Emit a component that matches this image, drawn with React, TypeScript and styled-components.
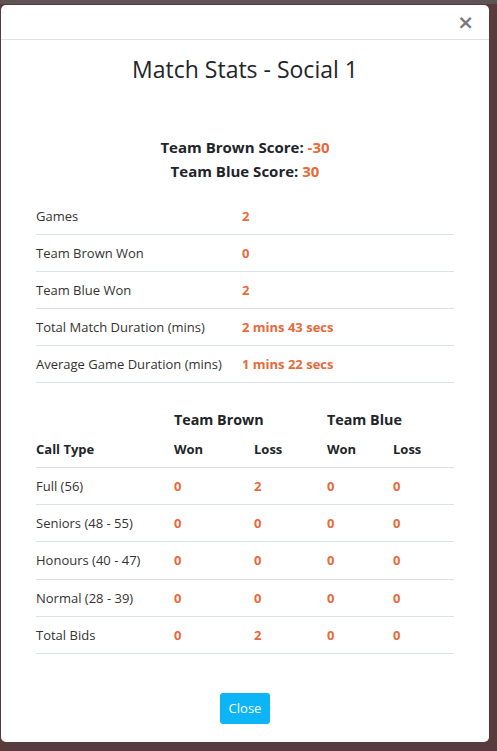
import React from "react";
import styled, { createGlobalStyle } from "styled-components";

const Global = createGlobalStyle`
  html, body { margin: 0; padding: 0; }
  body {
    background: #5a3b3d;
    font-family: "Open Sans", "Noto Sans", "Liberation Sans", sans-serif;
    color: #212529;
  }
  * { box-sizing: border-box; }
`;

const Backdrop = styled.div`
  width: 497px;
  height: 751px;
  background: #5a3b3d;
  border-top: 4px solid #5e5455;
  padding: 1px 8px 0 1px;
  overflow: hidden;
`;

const Modal = styled.div`
  width: 488px;
  height: 737px;
  background: #fff;
  border-radius: 5px;
  display: flex;
  flex-direction: column;
`;

const Header = styled.div`
  height: 35px;
  border-bottom: 1px solid #dee2e6;
  display: flex;
  justify-content: flex-end;
  align-items: center;
  padding-right: 15px;
`;

const CloseX = styled.button`
  border: 0;
  background: transparent;
  padding: 0;
  font-family: "DejaVu Sans", sans-serif;
  font-size: 20px;
  line-height: 20px;
  font-weight: 700;
  color: #7a7a7a;
  cursor: pointer;
`;

const Body = styled.div`
  flex: 1;
  display: flex;
  flex-direction: column;
  padding: 0 35px;
`;

const Title = styled.h3`
  margin: 14px 0 0;
  text-align: center;
  font-size: 23px;
  line-height: 30px;
  font-weight: 500;
  color: #212529;
`;

const Scores = styled.div`
  margin-top: 51px;
  display: flex;
  flex-direction: column;
  align-items: center;
`;

const ScoreLine = styled.div`
  font-size: 15px;
  line-height: 24px;
  font-weight: 700;
  color: #212529;
`;

const Val = styled.span`
  color: #e8693a;
  font-weight: 700;
`;

const StatTable = styled.div`
  margin-top: 15px;
  display: flex;
  flex-direction: column;
`;

const StatRow = styled.div`
  display: grid;
  grid-template-columns: 206px 1fr;
  height: 37px;
  align-items: center;
  border-bottom: 1px solid #dbe3ea;
  font-size: 13px;
  color: #333;
`;

const CallTable = styled.div`
  margin-top: 19px;
  display: flex;
  flex-direction: column;
`;

const Cols = "138px 80px 73px 66px 61px";

const GroupRow = styled.div`
  display: grid;
  grid-template-columns: 138px 153px 127px;
  height: 35px;
  align-items: center;
  font-size: 14.3px;
  font-weight: 700;
  color: #212529;
`;

const HeadRow = styled.div`
  display: grid;
  grid-template-columns: ${Cols};
  height: 31px;
  align-items: start;
  padding-top: 3px;
  border-bottom: 1px solid #dbe3ea;
  font-size: 13px;
  font-weight: 700;
  color: #212529;
`;

const CallRow = styled.div`
  display: grid;
  grid-template-columns: ${Cols};
  height: 37.2px;
  align-items: center;
  border-bottom: 1px solid #dbe3ea;
  font-size: 13px;
  color: #333;
`;

const Footer = styled.div`
  display: flex;
  justify-content: center;
  margin-top: 39px;
`;

const CloseButton = styled.button`
  background: #0db4f6;
  color: #fff;
  border: 0;
  border-radius: 3px;
  width: 50px;
  height: 31px;
  font-family: inherit;
  font-size: 13px;
  cursor: pointer;
`;

const stats: [string, string][] = [
  ["Games", "2"],
  ["Team Brown Won", "0"],
  ["Team Blue Won", "2"],
  ["Total Match Duration (mins)", "2 mins 43 secs"],
  ["Average Game Duration (mins)", "1 mins 22 secs"],
];

const calls: [string, string, string, string, string][] = [
  ["Full (56)", "0", "2", "0", "0"],
  ["Seniors (48 - 55)", "0", "0", "0", "0"],
  ["Honours (40 - 47)", "0", "0", "0", "0"],
  ["Normal (28 - 39)", "0", "0", "0", "0"],
  ["Total Bids", "0", "2", "0", "0"],
];

export default function App() {
  return (
    <>
      <Global />
      <Backdrop>
        <Modal>
          <Header>
            <CloseX aria-label="Close">×</CloseX>
          </Header>
          <Body>
            <Title>Match Stats - Social 1</Title>
            <Scores>
              <ScoreLine>
                Team Brown Score: <Val>-30</Val>
              </ScoreLine>
              <ScoreLine>
                Team Blue Score: <Val>30</Val>
              </ScoreLine>
            </Scores>
            <StatTable>
              {stats.map(([label, value]) => (
                <StatRow key={label}>
                  <span>{label}</span>
                  <Val>{value}</Val>
                </StatRow>
              ))}
            </StatTable>
            <CallTable>
              <GroupRow>
                <span />
                <span>Team Brown</span>
                <span>Team Blue</span>
              </GroupRow>
              <HeadRow>
                <span>Call Type</span>
                <span>Won</span>
                <span>Loss</span>
                <span>Won</span>
                <span>Loss</span>
              </HeadRow>
              {calls.map(([label, ...vals]) => (
                <CallRow key={label}>
                  <span>{label}</span>
                  {vals.map((v, i) => (
                    <Val key={i}>{v}</Val>
                  ))}
                </CallRow>
              ))}
            </CallTable>
            <Footer>
              <CloseButton>Close</CloseButton>
            </Footer>
          </Body>
        </Modal>
      </Backdrop>
    </>
  );
}
